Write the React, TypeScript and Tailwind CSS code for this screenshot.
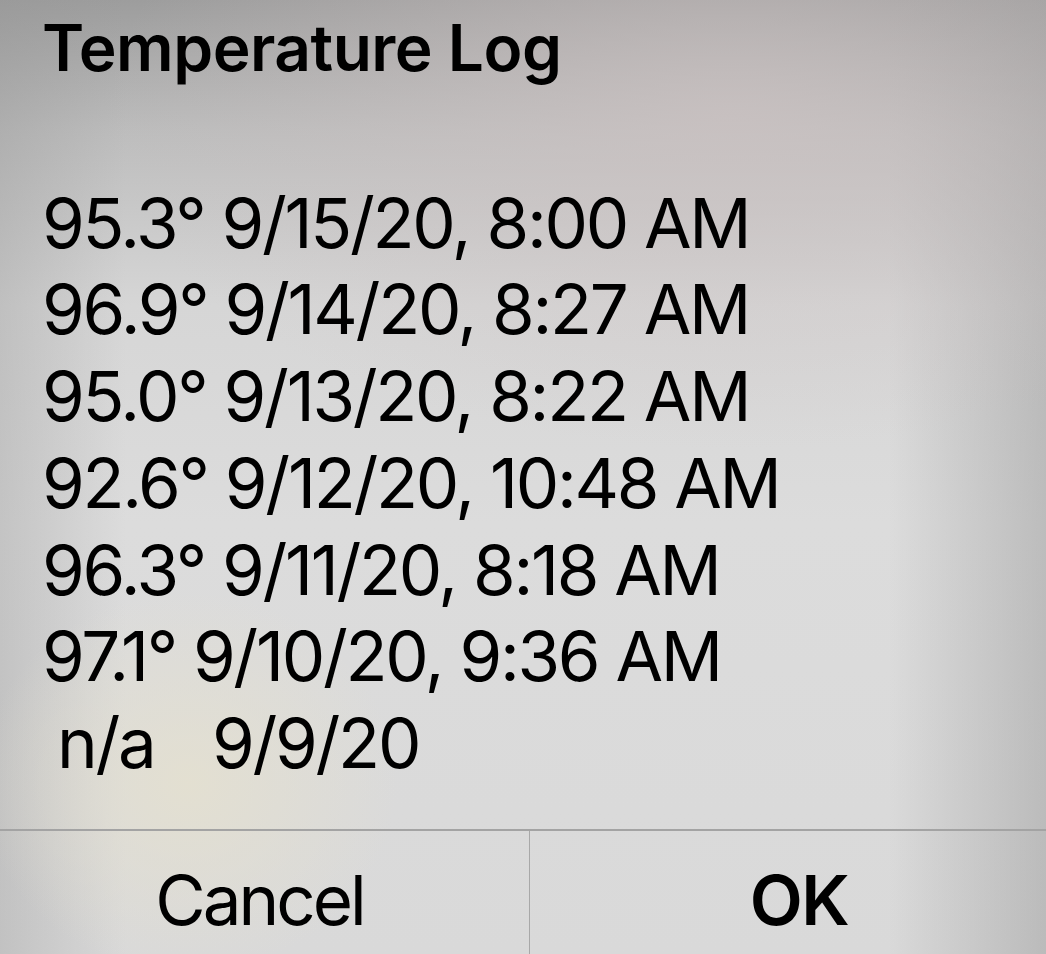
const entries = [
  "95.3° 9/15/20, 8:00 AM",
  "96.9° 9/14/20, 8:27 AM",
  "95.0° 9/13/20, 8:22 AM",
  "92.6° 9/12/20, 10:48 AM",
  "96.3° 9/11/20, 8:18 AM",
  "97.1° 9/10/20, 9:36 AM",
];

export default function App() {
  return (
    <div
      className="w-[1046px] h-[954px] overflow-hidden flex flex-col text-black bg-[radial-gradient(ellipse_60%_35%_at_70%_12%,rgba(205,195,195,0.7),transparent),radial-gradient(ellipse_20%_20%_at_18%_82%,rgba(228,224,208,0.9),transparent),linear-gradient(to_right,rgba(150,150,150,0.35),transparent_12%,transparent_85%,rgba(150,150,150,0.45)),linear-gradient(to_bottom,#9d9d9d_0%,#bdbdbd_14%,#d6d6d6_32%,#dcdcdc_55%,#d9d9d9_100%)]"
      style={{ fontFamily: "Inter, 'Noto Sans', sans-serif" }}
    >
      {/* Title + message */}
      <div className="h-[829px] px-[42px] pt-[10px]">
        <h1 className="text-[64px] font-semibold leading-[76px] tracking-[-0.5px]">
          Temperature Log
        </h1>
        <div className="pt-[7px] text-[69px] leading-[86.7px] tracking-[-2.3px] whitespace-pre">
          <div>&nbsp;</div>
          {entries.map((line) => (
            <div key={line}>{line}</div>
          ))}
          <div className="flex">
            <span className="pl-[15px] w-[170px]">n/a</span>
            <span>9/9/20</span>
          </div>
        </div>
      </div>
      {/* Buttons */}
      <div className="flex flex-1 border-t-2 border-[#a3a3a3]">
        <button className="w-[529px] shrink-0 flex justify-center pr-[10px] pt-[26px] text-[69px] tracking-[-3px] leading-[86px]">
          Cancel
        </button>
        <div className="w-px shrink-0 bg-[#a8a8a8]" />
        <button className="w-[538px] shrink-0 flex justify-center pt-[26px] text-[69px] font-semibold tracking-[-1.5px] leading-[86px]">
          OK
        </button>
      </div>
    </div>
  );
}
